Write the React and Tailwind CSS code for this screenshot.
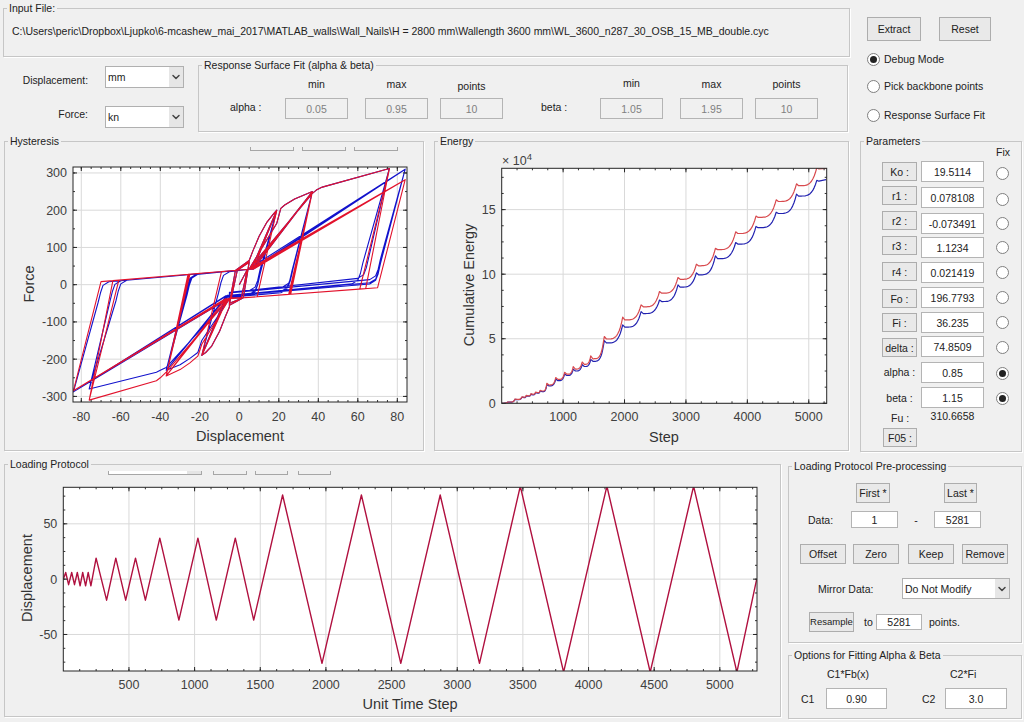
import { ChevronDown } from 'lucide-react';

// ---- chart data ----
const pinchUp = x => 39 + 0.44 * x;

function buildHysteresis(stages, sharp) {
  const pts = [[0, 0]];
  [[4, 40, -35], [5, 60, -50], [5, 62, -55], [5, 62, -55]].forEach(([a, p, n]) => {
    pts.push([a, p], [a - 3, -36 + 0.4 * (a - 3)], [-a, n], [-a + 3, pinchUp(-a + 3)]);
  });
  stages.forEach(st => {
    st.down.forEach((dn, c) => {
      const pin = x => dn[0] + dn[1] * x;
      const k = st.k + c * st.dk;
      // loading branch
      if (c === 0) st.primaryUp.forEach(p => pts.push(p));
      else if (st.retrace) st.retrace.up.forEach(p => pts.push(p));
      else pts.push([5 + c, pinchUp(5)], [st.A, st.Pp]);
      // unloading, then along the pinch line
      if (sharp) {
        pts.push([st.A - k, pin(st.A - k)], [-5, pin(-5)]);
      } else {
        const x = st.A - k;
        pts.push([x + 1.5, pin(x) + 56], [x + 0.3, pin(x) + 28], [x - 1, pin(x) + 10], [x - 4, pin(x - 4) + 2]);
        pts.push([-5, pin(-5)]);
      }
      // reversed loading branch
      if (c === 0) st.primaryDown.forEach(p => pts.push(p));
      else if (st.retrace) st.retrace.down.forEach(p => pts.push(p));
      else pts.push([-5 - c, pin(-5)], [-st.A, st.Pn]);
      // unloading back
      if (sharp) {
        pts.push([-st.A + k, pinchUp(-st.A + k)], [5, pinchUp(5)]);
      } else {
        const x = -st.A + k;
        pts.push([x - 1.5, pinchUp(x) - 56], [x - 0.3, pinchUp(x) - 30], [x + 1, pinchUp(x) - 10], [x + 4, pinchUp(x + 4) - 2]);
        pts.push([5, pinchUp(5)]);
      }
    });
  });
  return pts;
}

const upA = [[5, 65], [7, 92], [10, 130], [14, 168], [17, 188], [19, 200]];
const upB = [[5, 42], [19, 165], [21, 205], [23, 214], [28, 230], [37, 250]];
const upC = [[5, 42], [37, 245], [39, 254], [42, 262], [76, 312]];

const redPts = buildHysteresis([
  { A: 19, Pp: 200, Pn: -190, k: 10, dk: 0, down: [[-36, 0.4], [-36, 0.4], [-36, 0.4]], primaryUp: upA, primaryDown: [[-5, -60], [-7, -85], [-10, -125], [-14, -165], [-17, -182], [-19, -190]] },
  { A: 37, Pp: 250, Pn: -245, k: 11, dk: 0.5, down: [[-36, 0.4], [-36, 0.4], [-36, 0.4]], primaryUp: upB, primaryDown: [[-5, -38], [-19, -160], [-21, -192], [-25, -210], [-30, -228], [-37, -245]] },
  {
    A: 76, Pp: 312, Pn: -310, k: 12, dk: 3, down: [[-36, 0.4], [-36, 0.4]], primaryUp: upC, primaryDown: [[-5, -36], [-37, -235], [-40, -250], [-42, -258], [-76, -310]],
    retrace: { up: upC, down: [[-5, -36], [-37, -235], [-40, -250], [-42, -258], [-76, -310]] },
  },
  { A: 84, Pp: 282, Pn: -285, k: 14, dk: 0, down: [[-36, 0.4], [-36, 0.4], [-36, 0.4]], primaryUp: [[5, 42], [84, 282]], primaryDown: [[-5, -36], [-84, -285]] },
], true);

const bluePts = buildHysteresis([
  { A: 19, Pp: 200, Pn: -190, k: 10, dk: 0, down: [[-20, 0.4], [-30, 0.4], [-32, 0.4]], primaryUp: upA, primaryDown: [[-5, -60], [-7, -85], [-10, -125], [-14, -165], [-17, -182], [-19, -190]] },
  { A: 37, Pp: 250, Pn: -230, k: 11, dk: 0.5, down: [[-18, 0.45], [-28, 0.42], [-32, 0.4]], primaryUp: upB, primaryDown: [[-5, -38], [-19, -150], [-21, -182], [-25, -198], [-30, -215], [-37, -230]] },
  {
    A: 76, Pp: 312, Pn: -280, k: 12, dk: 3, down: [[-18, 0.55], [-26, 0.46]], primaryUp: upC, primaryDown: [[-5, -36], [-37, -222], [-40, -230], [-42, -235], [-76, -280]],
    retrace: { up: upC, down: [[-5, -36], [-37, -222], [-40, -230], [-42, -235], [-76, -280]] },
  },
  { A: 84, Pp: 310, Pn: -288, k: 14, dk: 0, down: [[-20, 0.48], [-26, 0.44], [-28, 0.42]], primaryUp: [[7, 50], [84, 310]], primaryDown: [[-5, -36], [-84, -288]] },
], false);

const protocol = [
  [1, 0], [18, 6], [40, -5], [64, 6], [85, -5], [107, 6], [128, -6], [148, 6], [170, -6], [190, 6], [210, -6],
  [250, 19], [330, -19], [400, 19], [475, -19], [550, 19], [625, -19],
  [735, 37], [880, -37], [1025, 37], [1165, -37], [1310, 37], [1450, -37],
  [1670, 76], [1970, -76], [2270, 76], [2570, -76], [2870, 76], [3170, -76],
  [3480, 84], [3810, -84], [4140, 84], [4470, -84], [4800, 84], [5130, -84], [5281, 0],
];

// step, peak, low-after-peak
const redPeaks = [
  [100, 0.1, 0.1], [215, 0.33, 0.3], [330, 0.5, 0.47], [400, 0.62, 0.58], [475, 0.74, 0.7], [550, 0.86, 0.82], [625, 1.0, 0.95],
  [735, 1.55, 1.42], [880, 2.0, 1.85], [1025, 2.4, 2.25], [1165, 2.84, 2.65], [1310, 3.2, 3.02], [1450, 3.67, 3.45],
  [1670, 5.17, 4.98], [1970, 6.67, 6.46], [2270, 7.62, 7.47], [2570, 8.66, 8.53], [2870, 9.74, 9.6], [3170, 10.77, 10.65],
  [3480, 12.0, 11.9], [3810, 13.28, 13.15], [4140, 14.5, 14.4], [4470, 15.76, 15.63], [4800, 17, 16.85], [5130, 18.25, 18.15],
];
const bluePeaks = [
  [100, 0.09, 0.09], [215, 0.3, 0.28], [330, 0.47, 0.44], [400, 0.58, 0.55], [475, 0.7, 0.66], [550, 0.82, 0.78], [625, 0.95, 0.9],
  [735, 1.45, 1.35], [880, 1.88, 1.75], [1025, 2.28, 2.15], [1165, 2.65, 2.5], [1310, 3.0, 2.85], [1450, 3.4, 3.25],
  [1670, 4.85, 4.68], [1970, 6.07, 5.9], [2270, 7.1, 6.95], [2570, 8.0, 7.88], [2870, 9.17, 9.0], [3170, 10.1, 9.95],
  [3480, 11.42, 11.2], [3810, 12.45, 12.33], [4140, 13.7, 13.6], [4470, 14.8, 14.7], [4800, 16.2, 16.05], [5130, 17.26, 17.2],
];

function energyCurve(peaks, end) {
  const pts = [[1, 0]];
  let s0 = 1, low = 0;
  peaks.forEach(([s, peak, nextLow]) => {
    for (let i = 1; i <= 14; i++) {
      const t = i / 14;
      pts.push([s0 + (s - s0) * t, low + (peak - low) * Math.pow(t, 4)]);
    }
    pts.push([s + 35, nextLow]);
    s0 = s + 35;
    low = nextLow;
  });
  pts.push([5281, end]);
  return pts;
}

const range = (a, b, step) => {
  const out = [];
  for (let v = a; v <= b + 1e-6; v += step) out.push(v);
  return out;
};

// ---- chart ----
function Chart({ id, view, box, xlim, ylim, xt, yt, xm, ym, xLabel, yLabel, labels, series, children }) {
  const { l, t, r, b } = box;
  const sx = v => l + ((v - xlim[0]) / (xlim[1] - xlim[0])) * (r - l);
  const sy = v => b - ((v - ylim[0]) / (ylim[1] - ylim[0])) * (b - t);
  const d = pts => pts.map((p, i) => `${i ? 'L' : 'M'}${sx(p[0]).toFixed(1)} ${sy(p[1]).toFixed(1)}`).join('');
  return (
    <svg width={view[2]} height={view[3]} viewBox={view.join(' ')} className="block">
      <clipPath id={id}><rect x={l} y={t} width={r - l} height={b - t} /></clipPath>
      <rect x={l} y={t} width={r - l} height={b - t} fill="#fff" />
      {xt.map(v => <line key={v} x1={sx(v)} x2={sx(v)} y1={t} y2={b} stroke="#d9d9d9" />)}
      {yt.map(v => <line key={v} x1={l} x2={r} y1={sy(v)} y2={sy(v)} stroke="#d9d9d9" />)}
      <g clipPath={`url(#${id})`} fill="none" strokeLinejoin="round">
        {series.map(s => <path key={s.color} d={d(s.pts)} stroke={s.color} strokeWidth={s.w || 1} />)}
      </g>
      {xm.filter(v => sx(v) > l && sx(v) < r).map(v => (
        <g key={v} stroke="#333">
          <line x1={sx(v)} x2={sx(v)} y1={b} y2={b - 2} />
          <line x1={sx(v)} x2={sx(v)} y1={t} y2={t + 2} />
        </g>
      ))}
      {ym.filter(v => sy(v) > t && sy(v) < b).map(v => (
        <g key={v} stroke="#333">
          <line x1={l} x2={l + 2} y1={sy(v)} y2={sy(v)} />
          <line x1={r} x2={r - 2} y1={sy(v)} y2={sy(v)} />
        </g>
      ))}
      {xt.map(v => (
        <g key={v} stroke="#262626">
          <line x1={sx(v)} x2={sx(v)} y1={b} y2={b - 4} />
          <line x1={sx(v)} x2={sx(v)} y1={t} y2={t + 4} />
        </g>
      ))}
      {yt.map(v => (
        <g key={v} stroke="#262626">
          <line x1={l} x2={l + 4} y1={sy(v)} y2={sy(v)} />
          <line x1={r} x2={r - 4} y1={sy(v)} y2={sy(v)} />
        </g>
      ))}
      <rect x={l} y={t} width={r - l} height={b - t} fill="none" stroke="#262626" />
      <g fill="#404040" fontSize="12.5">
        {xt.map(v => <text key={v} x={sx(v)} y={labels.xTickY} textAnchor="middle">{v}</text>)}
        {yt.map(v => <text key={v} x={l - 6} y={sy(v) + 4.5} textAnchor="end">{v}</text>)}
      </g>
      <g fill="#333" fontSize="14.5">
        <text x={labels.xLabel[0]} y={labels.xLabel[1]} textAnchor="middle">{xLabel}</text>
        <text transform={`translate(${labels.yLabel[0]} ${labels.yLabel[1]}) rotate(-90)`} textAnchor="middle">{yLabel}</text>
      </g>
      {children}
    </svg>
  );
}

// ---- form bits ----
function Panel({ title, className, children }) {
  return (
    <div className={`relative border border-[#c6c6c6] shadow-[1px_1px_0_#fff] ${className}`}>
      <span className="absolute -top-[8px] left-[3px] bg-[#f0f0f0] px-[2px] leading-[14px] text-[#222]">{title}</span>
      {children}
    </div>
  );
}

function Btn({ className, children }) {
  return (
    <div className={`flex items-center justify-center border border-[#adadad] bg-[#e9e9e9] text-[#222] ${className}`}>
      {children}
    </div>
  );
}

function Field({ className, children }) {
  return (
    <div className={`flex items-center justify-center border border-[#b4b4b4] bg-white text-[#222] ${className}`}>
      {children}
    </div>
  );
}

function Radio({ on, className = '' }) {
  return (
    <div className={`flex h-[13px] w-[13px] shrink-0 items-center justify-center rounded-full border border-[#7f7f7f] bg-white ${className}`}>
      {on && <div className="h-[7px] w-[7px] rounded-full bg-[#222]" />}
    </div>
  );
}

function Select({ className, value }) {
  return (
    <div className={`flex items-stretch border border-[#b0b0b0] bg-white text-[#222] ${className}`}>
      <span className="flex-1 self-center pl-[2px]">{value}</span>
      <span className="flex w-[14px] items-center justify-center bg-[#e6e6e6]">
        <ChevronDown size={12} strokeWidth={3} className="text-[#444]" />
      </span>
    </div>
  );
}

function FitCol({ head, value, headClass = 'mt-[11px]' }) {
  return (
    <div className="flex h-[53px] w-[63px] flex-col items-center">
      <span className={`leading-[14px] text-[#222] ${headClass}`}>{head}</span>
      <div className="mt-auto flex h-[21px] w-full items-center justify-center border border-[#b4b4b4] text-[#808080]">{value}</div>
    </div>
  );
}

const paramRows = [
  { label: 'Ko :', value: '19.5114', h: 'h-[26px]', btn: 'mt-[1px]', radio: 'mt-[6px]' },
  { label: 'r1 :', value: '0.078108', h: 'h-[26px]', btn: '-mt-[1px]', radio: 'mt-[6px]' },
  { label: 'r2 :', value: '-0.073491', h: 'h-[24px]', btn: '-mt-[2px]', radio: 'mt-[4px]' },
  { label: 'r3 :', value: '1.1234', h: 'h-[25px]', btn: '-mt-[1px]', radio: 'mt-[4px]' },
  { label: 'r4 :', value: '0.021419', h: 'h-[25px]', btn: 'mt-0', radio: 'mt-[4px]' },
  { label: 'Fo :', value: '196.7793', h: 'h-[25px]', btn: 'mt-[2px]', radio: 'mt-[4px]' },
  { label: 'Fi :', value: '36.235', h: 'h-[24px]', btn: 'mt-[1px]', radio: 'mt-[4px]' },
  { label: 'delta :', value: '74.8509', h: 'h-[26px]', btn: 'mt-[2px]', radio: 'mt-[5px]' },
  { label: 'alpha :', value: '0.85', h: 'h-[25px]', text: 'mt-[3px]', radio: 'mt-[5px]', on: true },
  { label: 'beta :', value: '1.15', h: 'h-[25px]', text: 'mt-[4px]', radio: 'mt-[5px]', on: true },
];

function Bar({ className = 'w-[44px]' }) {
  return <div className={`h-[4px] border-x border-b border-[#a6a6a6] ${className}`} />;
}

export default function App() {
  return (
    <div className="h-[722px] w-[1024px] overflow-hidden bg-[#f0f0f0] font-['Liberation_Sans',Arial,sans-serif] text-[10.5px] leading-[14px] text-[#222]">
      {/* top row */}
      <div className="flex h-[141px]">
        <div className="w-[860px] pl-[3px] pt-[8px]">
          <Panel title="Input File:" className="h-[49px] w-[847px] pl-[8px] pt-[15px]">
            <span className="text-[10.5px]">{'C:\\Users\\peric\\Dropbox\\Ljupko\\6-mcashew_mai_2017\\MATLAB_walls\\Wall_Nails\\H = 2800 mm\\Wallength 3600 mm\\WL_3600_n287_30_OSB_15_MB_double.cyc'}</span>
          </Panel>
          <div className="mt-[8px] flex">
            <div className="w-[195px]">
              <div className="mt-[1px] flex">
                <span className="mt-[8px] w-[85px] text-right text-[10.3px]">Displacement:</span>
                <Select value="mm" className="ml-[17px] h-[22px] w-[79px]" />
              </div>
              <div className="mt-[18px] flex">
                <span className="mt-[1px] w-[85px] text-right">Force:</span>
                <Select value="kn" className="ml-[17px] h-[22px] w-[79px]" />
              </div>
            </div>
            <Panel title="Response Surface Fit (alpha & beta)" className="flex h-[67px] w-[650px] pl-[31px]">
              <span className="mt-[34px] w-[55px]">alpha :</span>
              <FitCol head="min" value="0.05" />
              <div className="w-[17px]" />
              <FitCol head="max" value="0.95" />
              <div className="w-[12px]" />
              <FitCol head="points" value="10" headClass="mt-[13px]" />
              <span className="ml-[38px] mt-[34px] w-[59px]">beta :</span>
              <FitCol head="min" value="1.05" headClass="mt-[10px]" />
              <div className="w-[17px]" />
              <FitCol head="max" value="1.95" />
              <div className="w-[12px]" />
              <FitCol head="points" value="10" />
            </Panel>
          </div>
        </div>
        <div className="pl-[7px] pt-[17px]">
          <div className="flex">
            <Btn className="h-[24px] w-[54px]">Extract</Btn>
            <Btn className="ml-[18px] h-[24px] w-[52px]">Reset</Btn>
          </div>
          <div className="mt-[11px] flex items-center gap-[4px]"><Radio on />Debug Mode</div>
          <div className="mt-[13px] flex items-center gap-[4px]"><Radio />Pick backbone points</div>
          <div className="mt-[15px] flex items-center gap-[4px]"><Radio />Response Surface Fit</div>
        </div>
      </div>

      {/* charts row */}
      <div className="flex h-[323px]">
        <Panel title="Hysteresis" className="ml-[4px] h-[310px] w-[420px]">
          <div className="flex justify-end gap-[8px] pr-[25px] pt-[5px]">
            <Bar /><Bar /><Bar />
          </div>
          <Chart
            id="hy"
            view={[5, 151, 418, 299]}
            box={{ l: 73, t: 167, r: 407, b: 402 }}
            xlim={[-84.2, 84.9]}
            ylim={[-315, 316]}
            xt={range(-80, 80, 20)}
            yt={range(-300, 300, 100)}
            xm={range(-85, 85, 5)}
            ym={range(-300, 300, 50)}
            xLabel="Displacement"
            yLabel="Force"
            labels={{ xTickY: 421, xLabel: [240, 441], yLabel: [34, 284] }}
            series={[
              { color: '#1212cc', pts: bluePts, w: 1.1 },
              { color: '#e2122c', pts: redPts, w: 1.1 },
            ]}
          />
        </Panel>
        <Panel title="Energy" className="ml-[10px] h-[310px] w-[415px] pt-[9px]">
          <Chart
            id="en"
            view={[435, 151, 413, 299]}
            box={{ l: 501.7, t: 168.3, r: 826.7, b: 403.3 }}
            xlim={[0, 5292]}
            ylim={[0, 18.2]}
            xt={range(1000, 5000, 1000)}
            yt={[0, 5, 10, 15]}
            xm={range(250, 5250, 250)}
            ym={range(1.25, 17.5, 1.25)}
            xLabel="Step"
            yLabel="Cumulative Energy"
            labels={{ xTickY: 421, xLabel: [664, 442], yLabel: [474, 285] }}
            series={[
              { color: '#2222b0', pts: energyCurve(bluePeaks, 17.32), w: 1.2 },
              { color: '#d84a4e', pts: energyCurve(redPeaks, 18.2), w: 1.2 },
            ]}
          >
            <text x="502" y="164.5" fontSize="12.5" fill="#404040">
              × 10<tspan dy="-4.5" fontSize="9.5">4</tspan>
            </text>
          </Chart>
        </Panel>
        <Panel title="Parameters" className="ml-[11px] h-[311px] w-[162px] pl-[21px] pt-[3px]">
          <div className="ml-[114px] h-[15px] w-[16px]">Fix</div>
          <div className="mt-[1px]">
            {paramRows.map(r => (
              <div key={r.label} className={`flex items-start ${r.h}`}>
                <div className="w-[39px]">
                  {r.btn
                    ? <Btn className={`h-[19px] w-[35px] ${r.btn}`}>{r.label}</Btn>
                    : <div className={`w-[35px] text-center ${r.text}`}>{r.label}</div>}
                </div>
                <Field className="h-[21px] w-[63px]">{r.value}</Field>
                <Radio on={r.on} className={`ml-[12px] ${r.radio}`} />
              </div>
            ))}
            <div className="flex h-[16px] items-start">
              <div className="-mt-[1px] w-[39px] pl-[9px]">Fu :</div>
              <div className="-mt-[3px] w-[63px] text-center">310.6658</div>
            </div>
            <Btn className="ml-[1px] h-[19px] w-[34px]">F05 :</Btn>
          </div>
        </Panel>
      </div>

      {/* bottom row */}
      <div className="flex h-[258px]">
        <Panel title="Loading Protocol" className="ml-[4px] h-[253px] w-[777px] pt-[6px]">
          <div className="flex pl-[103px]">
            <div className="flex h-[4px] w-[94px] border-x border-b border-[#a6a6a6] bg-[#e4e4e4]">
              <div className="w-[78px] bg-white" />
            </div>
            <Bar className="ml-[11px] w-[34px]" />
            <Bar className="ml-[8px] w-[33px]" />
            <Bar className="ml-[10px] w-[33px]" />
          </div>
          <Chart
            id="lp"
            view={[5, 475, 775, 241]}
            box={{ l: 63.3, t: 487.3, r: 757, b: 671 }}
            xlim={[0, 5283]}
            ylim={[-83, 83]}
            xt={range(500, 5000, 500)}
            yt={[-50, 0, 50]}
            xm={range(125, 5250, 125)}
            ym={range(-75, 75, 12.5)}
            xLabel="Unit Time Step"
            yLabel="Displacement"
            labels={{ xTickY: 689, xLabel: [410, 709], yLabel: [32, 578] }}
            series={[{ color: '#b0103f', pts: protocol, w: 1.4 }]}
          />
        </Panel>
        <div className="ml-[7px] w-[234px]">
          <Panel title="Loading Protocol Pre-processing" className="mt-[2px] h-[177px] w-[234px]">
            <div className="ml-[67px] mt-[16px] flex">
              <Btn className="h-[20px] w-[34px]">First *</Btn>
              <Btn className="ml-[54px] h-[20px] w-[33px]">Last *</Btn>
            </div>
            <div className="mt-[8px] flex items-center">
              <span className="ml-[19px] w-[43px]">Data:</span>
              <Field className="h-[17px] w-[47px]">1</Field>
              <span className="w-[36px] text-center">-</span>
              <Field className="h-[17px] w-[47px]">5281</Field>
            </div>
            <div className="ml-[11px] mt-[16px] flex">
              <Btn className="h-[20px] w-[46px]">Offset</Btn>
              <Btn className="ml-[7px] h-[20px] w-[46px]">Zero</Btn>
              <Btn className="ml-[9px] h-[20px] w-[46px]">Keep</Btn>
              <Btn className="ml-[8px] h-[20px] w-[46px]">Remove</Btn>
            </div>
            <div className="mt-[14px] flex items-center">
              <span className="ml-[29px] w-[84px]">Mirror Data:</span>
              <Select value="Do Not Modify" className="h-[21px] w-[108px]" />
            </div>
            <div className="mt-[13px] flex items-center">
              <Btn className="ml-[20px] h-[20px] w-[45px] text-[9.5px]">Resample</Btn>
              <span className="ml-[10px] w-[12px]">to</span>
              <Field className="h-[16px] w-[46px]">5281</Field>
              <span className="ml-[7px]">points.</span>
            </div>
          </Panel>
          <Panel title="Options for Fitting Alpha & Beta" className="mt-[12px] h-[64px] w-[234px] pt-[11px]">
            <div className="ml-[38px] flex">
              <span className="w-[123px]">C1*Fb(x)</span>
              <span>C2*Fi</span>
            </div>
            <div className="mt-[7px] flex items-center">
              <span className="ml-[12px] w-[25px]">C1</span>
              <Field className="h-[21px] w-[61px]">0.90</Field>
              <span className="ml-[35px] w-[23px]">C2</span>
              <Field className="h-[21px] w-[62px]">3.0</Field>
            </div>
          </Panel>
        </div>
      </div>
    </div>
  );
}
